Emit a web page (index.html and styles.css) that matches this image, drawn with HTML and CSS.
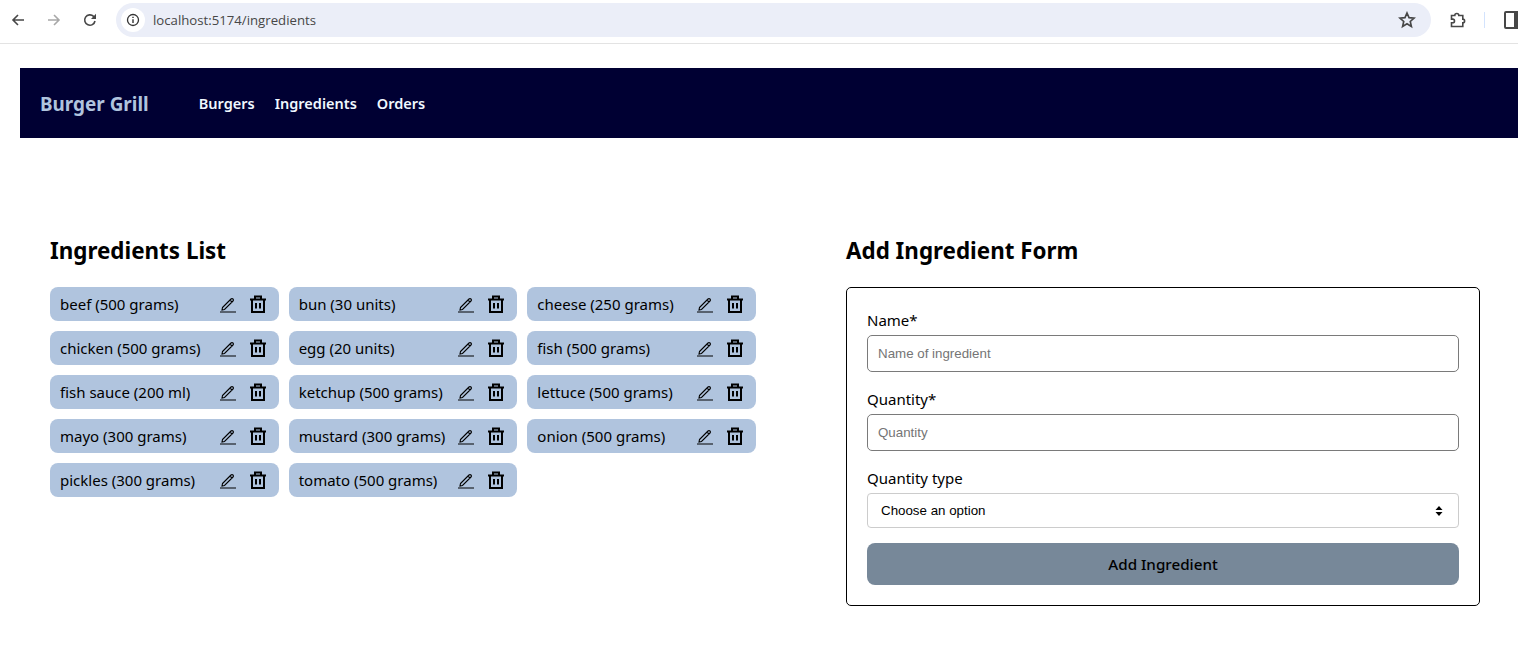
FILE: index.html
```html
<!DOCTYPE html>
<html lang="en">
<head>
<meta charset="UTF-8">
<meta name="viewport" content="width=device-width, initial-scale=1.0">
<title>Burger Grill</title>
<link rel="stylesheet" href="styles.css">
</head>
<body>
    <div class="browser-bar">
        <svg class="tool-icon" viewBox="0 0 16 16"><path d="M14 8H3M8 3 3 8l5 5" fill="none" stroke="#474747" stroke-width="1.6"/></svg>
        <svg class="tool-icon" viewBox="0 0 16 16"><path d="M2 8h11M8 3l5 5-5 5" fill="none" stroke="#a8a8a8" stroke-width="1.6"/></svg>
        <svg class="tool-icon" viewBox="0 0 16 16"><path d="M13 9a5.2 5.2 0 1 1-1.4-4.6L13.500 6" fill="none" stroke="#474747" stroke-width="1.6"/><path d="M14 1.800V7H9z" fill="#474747"/></svg>
        <div class="address">
            <span class="site-info">
                <svg viewBox="0 0 16 16" width="14" height="14"><circle cx="8" cy="8" r="6.300" fill="none" stroke="#333" stroke-width="1.500"/><path d="M8 7v4.500M8 4.300v1.500" stroke="#333" stroke-width="1.600"/></svg>
            </span>
            <span class="url">localhost:5174/ingredients</span>
            <svg class="star" viewBox="0 0 16 16"><path d="m8 1.800 1.800 4.100 4.500.4-3.400 3 1 4.400L8 11.400l-3.900 2.300 1-4.400-3.400-3 4.500-.4z" fill="none" stroke="#474747" stroke-width="1.500"/></svg>
        </div>
        <svg class="ext-icon" viewBox="0 0 18 18"><path d="M2.500 4.500h3.300a2 2 0 0 1 4 0h4v3.600a1.800 1.800 0 0 1 0 3.600v3.800H2.500v-3.800h1.200a1.800 1.800 0 0 0 0-3.600H2.500z" fill="none" stroke="#474747" stroke-width="1.600"/></svg>
        <span class="bar-divider"></span>
        <span class="side-icon"></span>
    </div>

    <nav class="navbar">
        <a class="brand" href="#">Burger Grill</a>
        <a class="nav-link" href="#">Burgers</a>
        <a class="nav-link" href="#">Ingredients</a>
        <a class="nav-link" href="#">Orders</a>
    </nav>

    <main class="content">
        <section class="list-col">
            <h2>Ingredients List</h2>
            <ul class="ingredients" id="ingredients"></ul>
        </section>
        <section class="form-col">
            <h2>Add Ingredient Form</h2>
            <form class="add-form">
                <label for="name">Name*</label>
                <input type="text" id="name" placeholder="Name of ingredient">
                <label for="quantity">Quantity*</label>
                <input type="text" id="quantity" placeholder="Quantity">
                <label for="qtype">Quantity type</label>
                <div class="select-box" id="qtype">
                    <span>Choose an option</span>
                    <svg viewBox="0 0 8 12" width="8" height="12"><path d="M4 1 7.500 5h-7zM4 11 .5 7h7z" fill="#000"/></svg>
                </div>
                <button type="button">Add Ingredient</button>
            </form>
        </section>
    </main>

    <script>
        const items = ['beef (500 grams)', 'bun (30 units)', 'cheese (250 grams)', 'chicken (500 grams)',
            'egg (20 units)', 'fish (500 grams)', 'fish sauce (200 ml)', 'ketchup (500 grams)',
            'lettuce (500 grams)', 'mayo (300 grams)', 'mustard (300 grams)', 'onion (500 grams)',
            'pickles (300 grams)', 'tomato (500 grams)'];

        const list = document.getElementById('ingredients');
        items.forEach(item => {
            const li = document.createElement('li');
            li.innerHTML = `<span>${item}</span>
                <svg class="edit" viewBox="0 0 18 18"><path d="M3.500 12.500 12 4a1.400 1.400 0 0 1 2 2l-8.500 8.500-2.500.5zM11 5l2 2M1 17h16" fill="none" stroke="#000" stroke-width="1.100"/></svg>
                <svg class="trash" viewBox="0 0 18 18"><path d="M1 4.500h16M3 4.500V17h12V4.500M6 4.500V1.500h6v3M7 8v5.500M11 8v5.500" fill="none" stroke="#000" stroke-width="2"/></svg>`;
            list.appendChild(li);
        });
    </script>
</body>
</html>
```

FILE: styles.css
```css
body {
    margin: 0;
    background-color: #fff;
    font-family: "Noto Sans", "Open Sans", sans-serif;
    color: #000;
}
.browser-bar {
    display: flex;
    align-items: center;
    height: 40px;
    padding: 0 0 3px 10px;
    border-bottom: 1px solid #e3e3e3;
    overflow: hidden;
}
.tool-icon {
    flex-shrink: 0;
    width: 16px;
    height: 16px;
    margin-right: 20px;
}
.address {
    display: flex;
    align-items: center;
    flex-shrink: 0;
    width: 1315px;
    height: 34px;
    margin-left: -2px;
    padding: 0 15px 0 5px;
    box-sizing: border-box;
    background-color: #ebeef8;
    border-radius: 17px;
}
.site-info {
    display: flex;
    align-items: center;
    justify-content: center;
    width: 24px;
    height: 24px;
    background-color: #fff;
    border-radius: 50%;
}
.url {
    flex: 1;
    margin-left: 8px;
    font-family: "Open Sans", sans-serif;
    font-size: 13.2px;
    color: #474747;
}
.star {
    width: 18px;
    height: 18px;
}
.ext-icon {
    flex-shrink: 0;
    width: 18px;
    height: 18px;
    margin-left: 18px;
}
.bar-divider {
    flex-shrink: 0;
    width: 1px;
    height: 16px;
    margin-left: 17px;
    background-color: #d3e3fd;
}
.side-icon {
    width: 15px;
    height: 14px;
    margin-left: 19px;
    flex-shrink: 0;
    border: 2px solid #474747;
    border-radius: 2px;
    background: linear-gradient(to right, #fff 50%, #474747 50%);
}
.navbar {
    display: flex;
    align-items: center;
    height: 70px;
    margin: 24px 0 0 20px;
    padding-left: 20px;
    background-color: #000033;
}
.brand {
    margin-right: 50px;
    padding-top: 1px;
    font-size: 18.9px;
    font-weight: 700;
    color: #b0c4de;
    text-decoration: none;
}
.nav-link {
    margin-right: 20px;
    font-size: 14.5px;
    font-weight: 600;
    color: #f0f8ff;
    text-decoration: none;
}
.content {
    display: flex;
    padding: 96px 38px 0 50px;
}
h2 {
    margin: 0 0 20px;
    font-size: 22.4px;
    line-height: 33px;
    font-weight: 700;
}
.list-col {
    width: 706px;
    margin-right: 90px;
}
.form-col {
    flex: 1;
}
.ingredients {
    display: grid;
    grid-template-columns: repeat(3, 1fr);
    gap: 10px;
    margin: 0;
    padding: 0;
    list-style-type: none;
}
.ingredients li {
    display: flex;
    align-items: center;
    height: 34px;
    padding: 0 12px 0 10px;
    box-sizing: border-box;
    background-color: #b0c4de;
    border-radius: 8px;
    font-size: 15px;
}
.ingredients span {
    flex: 1;
    white-space: nowrap;
}
.edit {
    width: 18px;
    height: 18px;
    margin-right: 12px;
}
.trash {
    width: 18px;
    height: 18px;
}
.add-form {
    display: flex;
    flex-direction: column;
    height: 319px;
    padding: 20px;
    box-sizing: border-box;
    border: 1px solid #000;
    border-radius: 5px;
}
label {
    padding-bottom: 2px;
    font-size: 15px;
    line-height: 25px;
}
input[type="text"] {
    height: 37px;
    margin-bottom: 15px;
    padding: 0 10px;
    box-sizing: border-box;
    border: 1px solid #7a7a7a;
    border-radius: 5px;
    font-family: "Liberation Sans", sans-serif;
    font-size: 13.33px;
}
input::placeholder {
    color: #757575;
}
.select-box {
    display: flex;
    align-items: center;
    justify-content: space-between;
    flex-shrink: 0;
    height: 35px;
    padding: 0 15px 0 13px;
    box-sizing: border-box;
    border: 1px solid #ccc;
    border-radius: 4px;
    font-family: "Liberation Sans", sans-serif;
    font-size: 13.33px;
}
button {
    flex-shrink: 0;
    height: 42px;
    margin-top: 15px;
    background-color: #778899;
    color: #000;
    border: none;
    border-radius: 8px;
    font-family: "Noto Sans", sans-serif;
    font-size: 15.2px;
    font-weight: 500;
}
```
